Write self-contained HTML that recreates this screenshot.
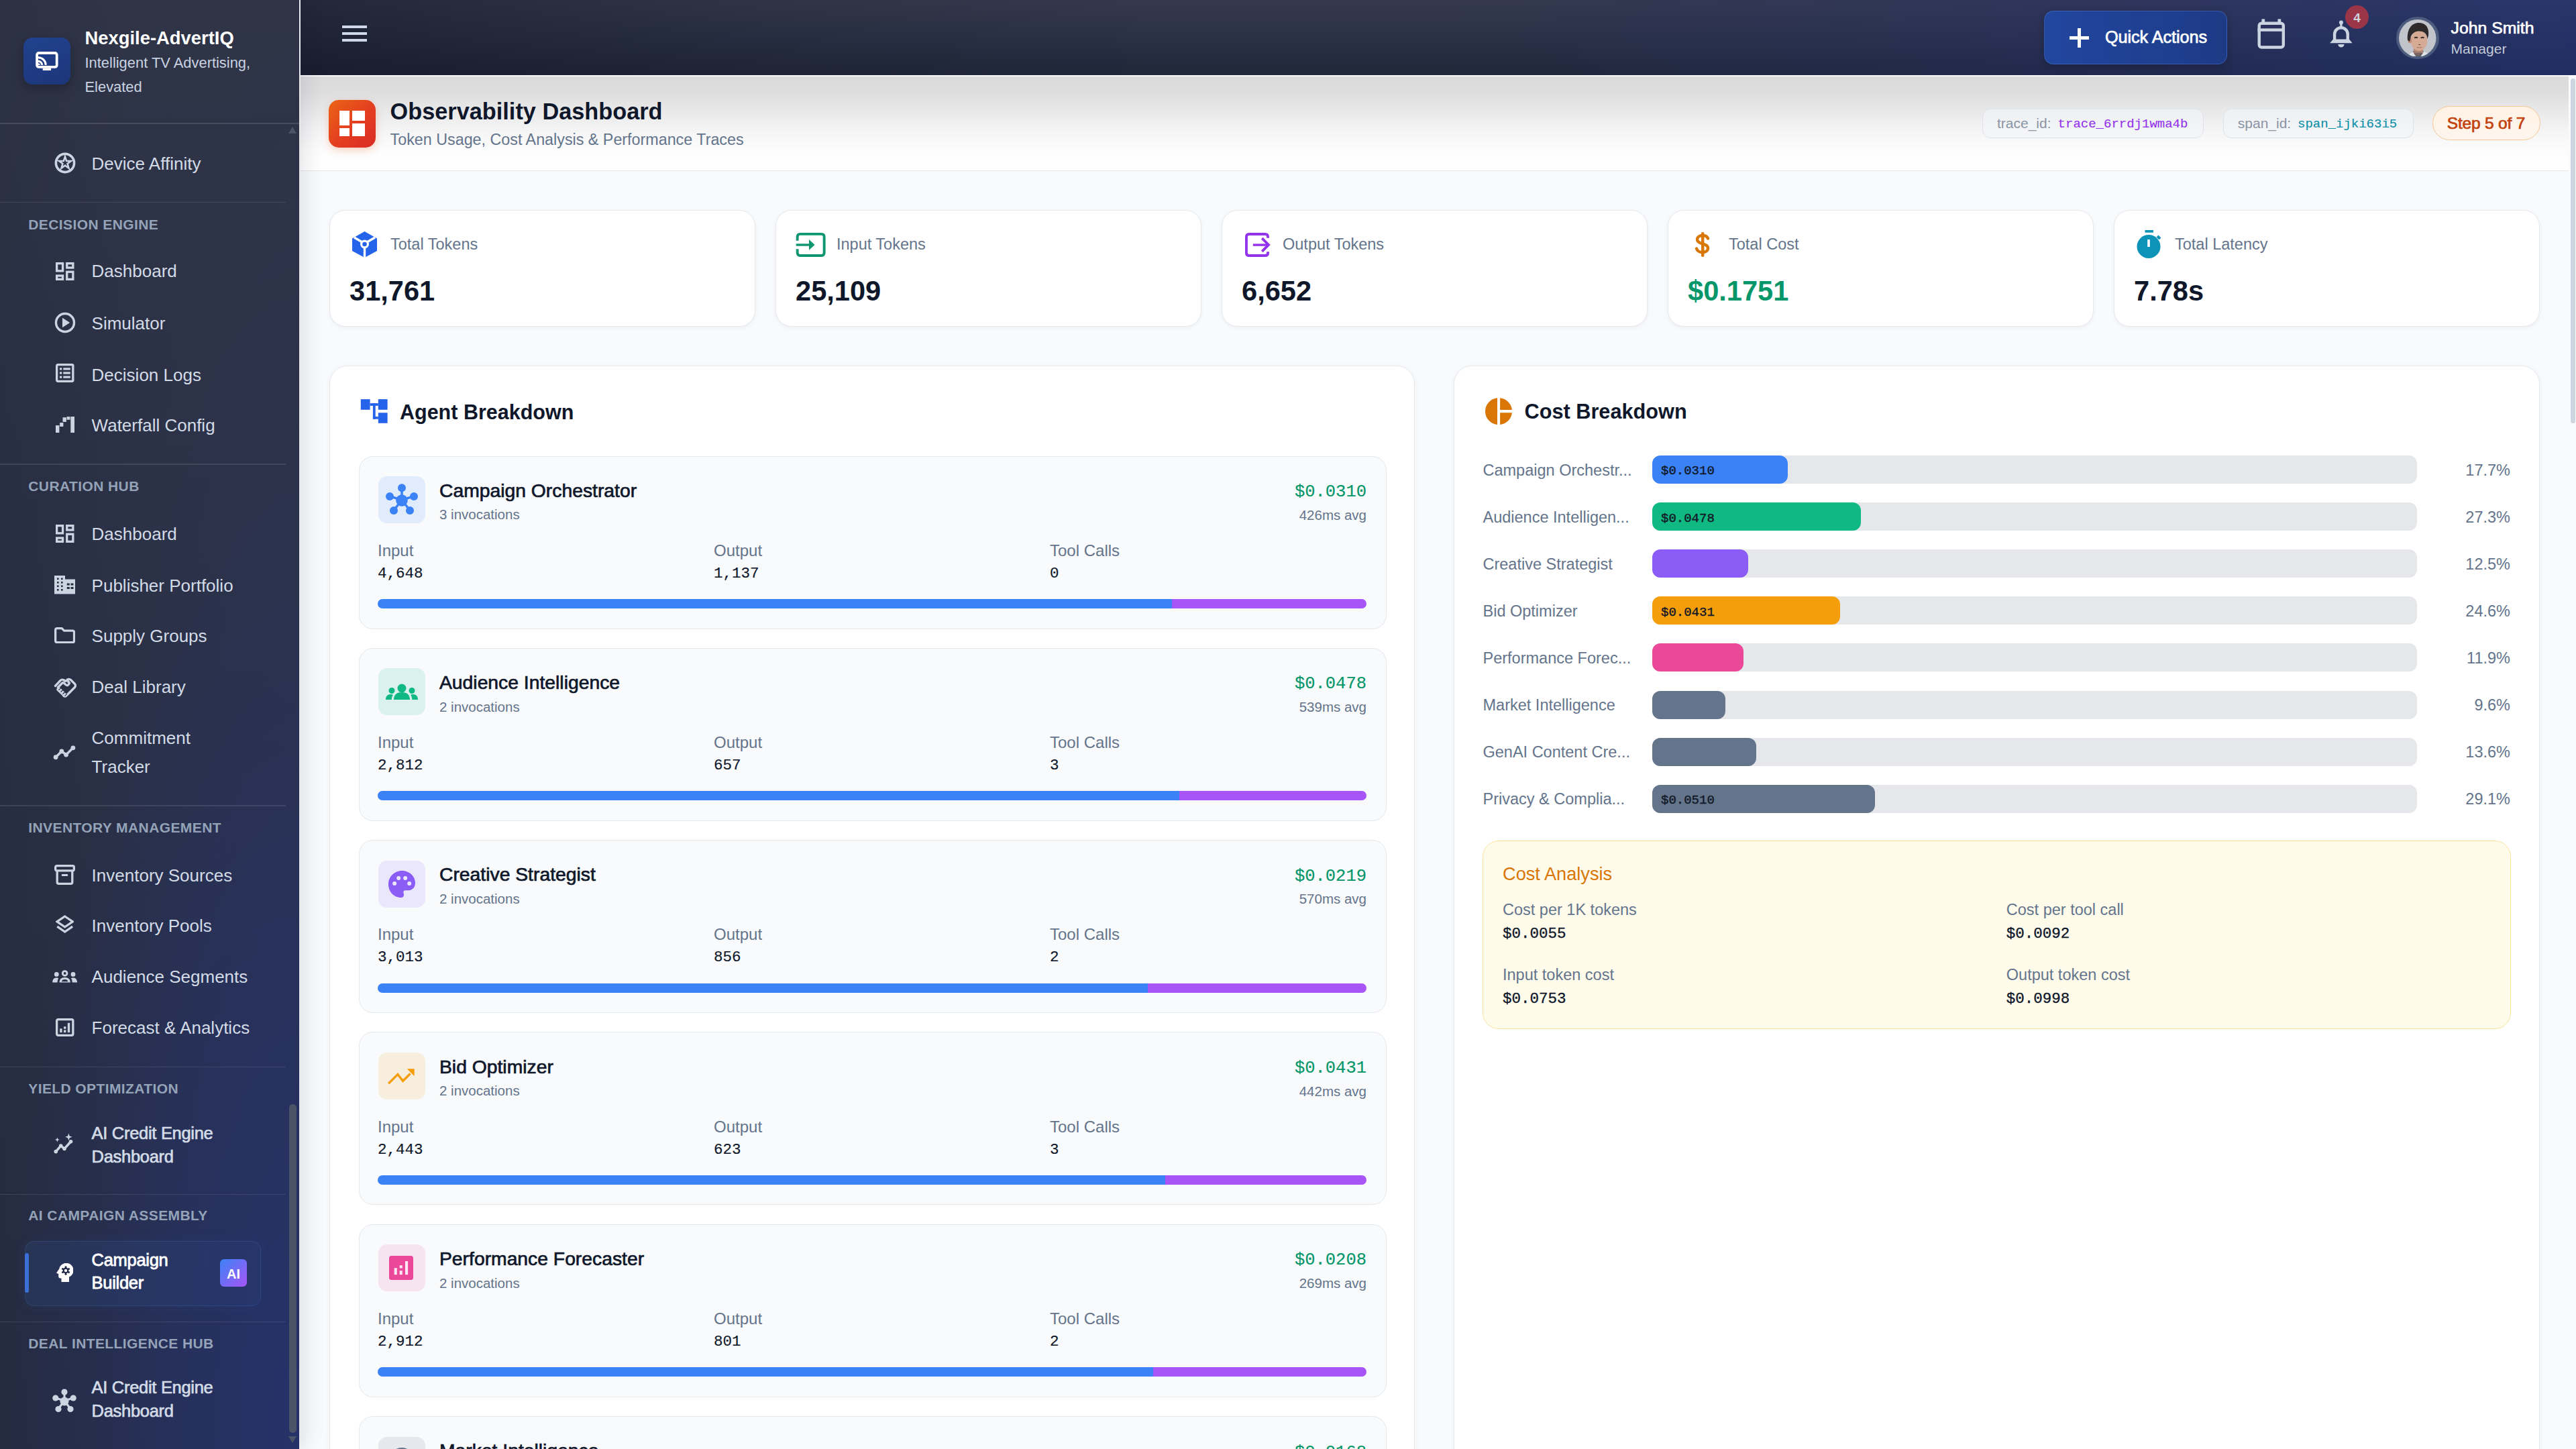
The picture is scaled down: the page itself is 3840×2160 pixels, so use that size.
<!DOCTYPE html>
<html><head><meta charset="utf-8"><title>Observability Dashboard</title>
<style>
*{box-sizing:border-box;margin:0;padding:0}
html,body{width:3840px;height:2160px;overflow:hidden;background:#f8fafc;font-family:"Liberation Sans",sans-serif}
.t{position:absolute;white-space:nowrap}
.r{position:absolute;display:block}
</style></head><body>
<div class="r" style="left:0.00px;top:0.00px;width:446.00px;height:2160.00px;background:radial-gradient(ellipse 110% 70% at 100% 100%,rgba(36,50,112,0.75) 0%,rgba(36,50,112,0.3) 55%,rgba(36,50,112,0) 90%),linear-gradient(90deg,rgba(18,22,36,0.10) 0%,rgba(0,0,0,0) 45%),radial-gradient(ellipse 80% 110% at 100% 95%,rgba(44,58,125,0.28) 0%,rgba(44,58,125,0) 85%),linear-gradient(180deg,#2f3447 0%,#2b3146 40%,#272d43 100%);box-shadow:6px 0 30px rgba(15,23,42,0.12);z-index:2"></div>
<div class="r" style="left:35.00px;top:56.00px;width:70.00px;height:70.00px;border-radius:14px;background:linear-gradient(160deg,#21428f 0%,#1c3679 100%);box-shadow:0 6px 16px rgba(0,0,0,0.25);z-index:3"></div>
<svg class="r" style="left:52.00px;top:76.00px;z-index:3" width="36.00" height="30.00" viewBox="0 0 36 30"><rect x="3.1" y="3" width="29.6" height="20.8" rx="2.6" fill="none" stroke="#fff" stroke-width="3.8"/><rect x="11.7" y="25.5" width="12.4" height="3.5" fill="#fff"/><path d="M5 9.8A11.3 11.3 0 0 1 16.3 21.1" fill="none" stroke="#fff" stroke-width="3"/><path d="M5 15.3A5.8 5.8 0 0 1 10.8 21.1" fill="none" stroke="#fff" stroke-width="3"/><path d="M5 18.3A2.8 2.8 0 0 1 7.8 21.1H5Z" fill="#fff"/></svg>
<div class="t" style="top:42.80px;font-size:27.4px;line-height:27.4px;font-weight:700;color:#ffffff;font-family:'Liberation Sans',sans-serif;left:126.50px;z-index:3">Nexgile-AdvertIQ</div>
<div class="t" style="top:82.96px;font-size:21.9px;line-height:21.9px;font-weight:400;color:#c9d2e0;font-family:'Liberation Sans',sans-serif;left:126.50px;z-index:3">Intelligent TV Advertising,</div>
<div class="t" style="top:119.36px;font-size:21.9px;line-height:21.9px;font-weight:400;color:#c9d2e0;font-family:'Liberation Sans',sans-serif;left:126.50px;z-index:3">Elevated</div>
<div class="r" style="left:0.00px;top:183.00px;width:446.00px;height:1.50px;background:rgba(255,255,255,0.12);z-index:3"></div>
<div class="t" style="top:231.39px;font-size:26px;line-height:26px;font-weight:400;color:#d3dbe7;font-family:'Liberation Sans',sans-serif;left:136.60px;z-index:3">Device Affinity</div>
<svg class="r" style="left:80.60px;top:227.00px;z-index:3" width="32.00" height="32.00" viewBox="0 0 32 32"><circle cx="16" cy="16" r="13.6" fill="none" stroke="#cbd5e1" stroke-width="3.6"/><path d="M16 2.5L19.1 11.8 28.8 11.8 21 17.6 23.9 26.9 16 21.2 8.1 26.9 11 17.6 3.2 11.8 12.9 11.8Z" fill="#cbd5e1"/><path d="M16 10.6L17.3 14.3 21.2 14.3 18.1 16.6 19.2 20.4 16 18.1 12.8 20.4 13.9 16.6 10.8 14.3 14.7 14.3Z" fill="#2b3146"/></svg>
<div class="r" style="left:0.00px;top:300.50px;width:426.00px;height:1.50px;background:rgba(255,255,255,0.10);z-index:3"></div>
<div class="t" style="top:323.62px;font-size:21px;line-height:21px;font-weight:700;color:#94a3b8;font-family:'Liberation Sans',sans-serif;letter-spacing:0.4px;left:42.30px;z-index:3">DECISION ENGINE</div>
<div class="t" style="top:391.49px;font-size:26px;line-height:26px;font-weight:400;color:#d3dbe7;font-family:'Liberation Sans',sans-serif;left:136.60px;z-index:3">Dashboard</div>
<svg class="r" style="left:83.00px;top:390.60px;z-index:3" width="27.50" height="27.00" viewBox="0 0 27.5 27"><g fill="none" stroke="#cbd5e1" stroke-width="3.3"><rect x="1.65" y="1.65" width="8.9" height="11.2"/><rect x="16.75" y="1.65" width="9.1" height="6.4"/><rect x="1.65" y="20" width="8.9" height="5.35"/><rect x="16.75" y="14.25" width="9.1" height="11.1"/></g></svg>
<div class="t" style="top:468.99px;font-size:26px;line-height:26px;font-weight:400;color:#d3dbe7;font-family:'Liberation Sans',sans-serif;left:136.60px;z-index:3">Simulator</div>
<svg class="r" style="left:80.65px;top:464.85px;z-index:3" width="32.00" height="32.00" viewBox="0 0 32 32"><circle cx="16" cy="16" r="13.5" fill="none" stroke="#cbd5e1" stroke-width="3.4"/><path d="M12 8.8v14.4l11.2-7.2z" fill="#cbd5e1"/></svg>
<div class="t" style="top:545.99px;font-size:26px;line-height:26px;font-weight:400;color:#d3dbe7;font-family:'Liberation Sans',sans-serif;left:136.60px;z-index:3">Decision Logs</div>
<svg class="r" style="left:83.00px;top:542.00px;z-index:3" width="27.50" height="28.00" viewBox="0 0 27.5 28"><rect x="1.65" y="1.65" width="24.2" height="24.7" rx="1.5" fill="none" stroke="#cbd5e1" stroke-width="3.3"/><g fill="#cbd5e1"><rect x="6" y="6.3" width="3.3" height="3.2"/><rect x="11.3" y="6.3" width="10.5" height="3.2"/><rect x="6" y="12.4" width="3.3" height="3.2"/><rect x="11.3" y="12.4" width="10.5" height="3.2"/><rect x="6" y="18.5" width="3.3" height="3.2"/><rect x="11.3" y="18.5" width="10.5" height="3.2"/></g></svg>
<div class="t" style="top:620.69px;font-size:26px;line-height:26px;font-weight:400;color:#d3dbe7;font-family:'Liberation Sans',sans-serif;left:136.60px;z-index:3">Waterfall Config</div>
<svg class="r" style="left:82.60px;top:621.00px;z-index:3" width="28.20" height="24.00" viewBox="0 0 28.2 24"><g fill="#cbd5e1"><rect x="0" y="13.1" width="5.4" height="10.9"/><rect x="6.2" y="9.1" width="5.2" height="5.8"/><rect x="10.5" y="1.2" width="5.4" height="6.7"/><rect x="16.6" y="0.1" width="4.8" height="4.6"/><rect x="22.3" y="0" width="5.9" height="24"/></g></svg>
<div class="r" style="left:0.00px;top:691.20px;width:426.00px;height:1.50px;background:rgba(255,255,255,0.10);z-index:3"></div>
<div class="t" style="top:713.72px;font-size:21px;line-height:21px;font-weight:700;color:#94a3b8;font-family:'Liberation Sans',sans-serif;letter-spacing:0.4px;left:42.30px;z-index:3">CURATION HUB</div>
<div class="t" style="top:782.99px;font-size:26px;line-height:26px;font-weight:400;color:#d3dbe7;font-family:'Liberation Sans',sans-serif;left:136.60px;z-index:3">Dashboard</div>
<svg class="r" style="left:83.00px;top:782.10px;z-index:3" width="27.50" height="27.00" viewBox="0 0 27.5 27"><g fill="none" stroke="#cbd5e1" stroke-width="3.3"><rect x="1.65" y="1.65" width="8.9" height="11.2"/><rect x="16.75" y="1.65" width="9.1" height="6.4"/><rect x="1.65" y="20" width="8.9" height="5.35"/><rect x="16.75" y="14.25" width="9.1" height="11.1"/></g></svg>
<div class="t" style="top:859.79px;font-size:26px;line-height:26px;font-weight:400;color:#d3dbe7;font-family:'Liberation Sans',sans-serif;left:136.60px;z-index:3">Publisher Portfolio</div>
<svg class="r" style="left:81.00px;top:858.20px;z-index:3" width="31.20" height="27.40" viewBox="0 0 31.2 27.4"><path d="M0 0H16V5.4H31.2V27.4H0Z" fill="#cbd5e1"/><g fill="#262c42"><rect x="4" y="3.5" width="2.6" height="2.6"/><rect x="10" y="3.5" width="2.6" height="2.6"/><rect x="4" y="9" width="2.6" height="2.6"/><rect x="10" y="9" width="2.6" height="2.6"/><rect x="4" y="14.5" width="2.6" height="2.6"/><rect x="10" y="14.5" width="2.6" height="2.6"/><rect x="4" y="20" width="2.6" height="2.6"/><rect x="10" y="20" width="2.6" height="2.6"/><rect x="18.8" y="11.5" width="4" height="3"/><rect x="24.5" y="11.5" width="4" height="3"/><rect x="18.8" y="17" width="4" height="3"/><rect x="24.5" y="17" width="4" height="3"/></g></svg>
<div class="t" style="top:935.39px;font-size:26px;line-height:26px;font-weight:400;color:#d3dbe7;font-family:'Liberation Sans',sans-serif;left:136.60px;z-index:3">Supply Groups</div>
<svg class="r" style="left:81.00px;top:935.00px;z-index:3" width="31.20" height="24.30" viewBox="0 0 31.2 24.3"><path d="M1.65 4.2Q1.65 1.65 4.2 1.65H11.2L14.6 5.2H27Q29.55 5.2 29.55 7.75V20.1Q29.55 22.65 27 22.65H4.2Q1.65 22.65 1.65 20.1Z" fill="none" stroke="#cbd5e1" stroke-width="3.3" stroke-linejoin="round"/></svg>
<div class="t" style="top:1010.99px;font-size:26px;line-height:26px;font-weight:400;color:#d3dbe7;font-family:'Liberation Sans',sans-serif;left:136.60px;z-index:3">Deal Library</div>
<svg class="r" style="left:80.00px;top:1008.50px;z-index:3" width="34.00" height="31.00" viewBox="0 0 34 31"><path d="M2.5 13.5L10 5.5Q12 3.5 14.5 4.5L17 6M20.5 4Q23 2.5 25.5 4.5L31.5 10.5Q33.5 13 31.5 15.5L19 28Q17 30 15 28.5" fill="none" stroke="#cbd5e1" stroke-width="3.3" stroke-linecap="round" stroke-linejoin="round"/><path d="M5.5 16.5L12.5 9.5Q14 8 15.5 9.5L18.5 12Q20.5 13.5 22 11.5L23.5 9.5Q22 6 19 5.5L16 7" fill="none" stroke="#cbd5e1" stroke-width="3.3" stroke-linejoin="round"/><path d="M4.5 17.5Q3.5 19.5 5.5 21L14 29Q16 30.5 18 28.5L20 26.5 10 16.5 7 14.5Z" fill="#cbd5e1"/><g stroke="#232a40" stroke-width="1.1"><path d="M7.5 19.5L11.5 16.2M10.5 22.5L14.2 19.2M13.5 25.5L17 22.5M16.5 28.3L19.6 25.6"/></g></svg>
<div class="t" style="top:1087.39px;font-size:26px;line-height:26px;font-weight:400;color:#d3dbe7;font-family:'Liberation Sans',sans-serif;left:136.60px;z-index:3">Commitment</div>
<div class="t" style="top:1129.59px;font-size:26px;line-height:26px;font-weight:400;color:#d3dbe7;font-family:'Liberation Sans',sans-serif;left:136.60px;z-index:3">Tracker</div>
<svg class="r" style="left:79.30px;top:1104.00px;z-index:3" width="34.00" height="34.00" viewBox="0 0 33 33"><path d="M4 24l8.5-8.5 6.5 5 10-10" fill="none" stroke="#cbd5e1" stroke-width="3.4" stroke-linejoin="round"/><circle cx="4" cy="24" r="3.3" fill="#cbd5e1"/><circle cx="12.5" cy="15.5" r="3.3" fill="#cbd5e1"/><circle cx="19" cy="20.5" r="3.3" fill="#cbd5e1"/><circle cx="29" cy="10.5" r="3.3" fill="#cbd5e1"/></svg>
<div class="r" style="left:0.00px;top:1200.00px;width:426.00px;height:1.50px;background:rgba(255,255,255,0.10);z-index:3"></div>
<div class="t" style="top:1222.52px;font-size:21px;line-height:21px;font-weight:700;color:#94a3b8;font-family:'Liberation Sans',sans-serif;letter-spacing:0.4px;left:42.30px;z-index:3">INVENTORY MANAGEMENT</div>
<div class="t" style="top:1291.89px;font-size:26px;line-height:26px;font-weight:400;color:#d3dbe7;font-family:'Liberation Sans',sans-serif;left:136.60px;z-index:3">Inventory Sources</div>
<svg class="r" style="left:81.20px;top:1288.70px;z-index:3" width="31.00" height="30.00" viewBox="0 0 31 30"><rect x="1.65" y="1.65" width="27.7" height="7.2" rx="2" fill="none" stroke="#cbd5e1" stroke-width="3.3"/><path d="M4.2 8.8V26Q4.2 28.35 6.5 28.35H24.5Q26.8 28.35 26.8 26V8.8" fill="none" stroke="#cbd5e1" stroke-width="3.3"/><rect x="10.8" y="14" width="9.4" height="3.1" rx="1" fill="#cbd5e1"/></svg>
<div class="t" style="top:1366.79px;font-size:26px;line-height:26px;font-weight:400;color:#d3dbe7;font-family:'Liberation Sans',sans-serif;left:136.60px;z-index:3">Inventory Pools</div>
<svg class="r" style="left:83.10px;top:1364.00px;z-index:3" width="27.40" height="29.00" viewBox="0 0 27.4 29"><path d="M13.7 2L25.4 9.9 13.7 17.8 2 9.9Z" fill="none" stroke="#cbd5e1" stroke-width="3.2" stroke-linejoin="miter"/><path d="M2.3 17.2L13.7 25 25.1 17.2" fill="none" stroke="#cbd5e1" stroke-width="3.3"/></svg>
<div class="t" style="top:1442.99px;font-size:26px;line-height:26px;font-weight:400;color:#d3dbe7;font-family:'Liberation Sans',sans-serif;left:136.60px;z-index:3">Audience Segments</div>
<svg class="r" style="left:78.10px;top:1446.40px;z-index:3" width="37.30" height="18.60" viewBox="0 0 37.3 18.6"><g fill="#cbd5e1"><circle cx="6.3" cy="6.4" r="3.4"/><path d="M0.2 18.6C0.2 14 2.5 11.5 6.3 11.5 7.6 11.5 8.6 11.8 9.4 12.3 8.2 14 7.6 16 7.6 18.6Z"/><circle cx="31" cy="6.4" r="3.4"/><path d="M37.1 18.6C37.1 14 34.8 11.5 31 11.5 29.7 11.5 28.7 11.8 27.9 12.3 29.1 14 29.7 16 29.7 18.6Z"/></g><circle cx="18.65" cy="4.9" r="3.3" fill="none" stroke="#cbd5e1" stroke-width="2.9"/><path d="M10.5 18.6C10.5 13.8 13.5 11 18.65 11S26.8 13.8 26.8 18.6Z" fill="#cbd5e1"/><path d="M14 17.2C14.4 15.2 16 14.1 18.65 14.1S22.9 15.2 23.3 17.2Z" fill="#262d46"/></svg>
<div class="t" style="top:1518.99px;font-size:26px;line-height:26px;font-weight:400;color:#d3dbe7;font-family:'Liberation Sans',sans-serif;left:136.60px;z-index:3">Forecast & Analytics</div>
<svg class="r" style="left:83.00px;top:1518.40px;z-index:3" width="27.50" height="27.00" viewBox="0 0 27.5 27"><rect x="1.65" y="1.65" width="24.2" height="23.7" rx="2" fill="none" stroke="#cbd5e1" stroke-width="3.3"/><g fill="#cbd5e1"><rect x="6.2" y="15.3" width="3.4" height="5.8"/><rect x="12" y="17.5" width="3.4" height="3.6"/><rect x="12" y="12.3" width="3.4" height="3.4"/><rect x="17.8" y="6.8" width="3.4" height="14.3"/></g></svg>
<div class="r" style="left:0.00px;top:1589.90px;width:426.00px;height:1.50px;background:rgba(255,255,255,0.10);z-index:3"></div>
<div class="t" style="top:1612.02px;font-size:21px;line-height:21px;font-weight:700;color:#94a3b8;font-family:'Liberation Sans',sans-serif;letter-spacing:0.4px;left:42.30px;z-index:3">YIELD OPTIMIZATION</div>
<div class="t" style="top:1677.41px;font-size:25.5px;line-height:25.5px;font-weight:400;color:#d3dbe7;font-family:'Liberation Sans',sans-serif;-webkit-text-stroke:0.7px currentColor;left:136.60px;z-index:3;letter-spacing:-0.3px">AI Credit Engine</div>
<div class="t" style="top:1712.11px;font-size:25.5px;line-height:25.5px;font-weight:400;color:#d3dbe7;font-family:'Liberation Sans',sans-serif;-webkit-text-stroke:0.7px currentColor;left:136.60px;z-index:3;letter-spacing:-0.3px">Dashboard</div>
<svg class="r" style="left:79.30px;top:1689.00px;z-index:3" width="34.00" height="34.00" viewBox="0 0 32 32"><path d="M4 26l7-8 5 4 9-10" fill="none" stroke="#cbd5e1" stroke-width="3.4" stroke-linejoin="round"/><circle cx="4" cy="26" r="2.6" fill="#cbd5e1"/><circle cx="11" cy="18" r="2.6" fill="#cbd5e1"/><circle cx="16" cy="22" r="2.6" fill="#cbd5e1"/><circle cx="25" cy="12" r="2.6" fill="#cbd5e1"/><path d="M22 0.5l1.3 3.7 3.7 1.3-3.7 1.3-1.3 3.7-1.3-3.7-3.7-1.3 3.7-1.3zM6 6l.9 2.4 2.4.9-2.4.9L6 12.6l-.9-2.4-2.4-.9 2.4-.9z" fill="#cbd5e1"/></svg>
<div class="r" style="left:0.00px;top:1779.50px;width:426.00px;height:1.50px;background:rgba(255,255,255,0.10);z-index:3"></div>
<div class="t" style="top:1801.22px;font-size:21px;line-height:21px;font-weight:700;color:#94a3b8;font-family:'Liberation Sans',sans-serif;letter-spacing:0.4px;left:42.30px;z-index:3">AI CAMPAIGN ASSEMBLY</div>
<div class="r" style="left:37.00px;top:1850.00px;width:352.00px;height:97.00px;border-radius:14px;background:linear-gradient(90deg,rgba(59,130,246,0.10),rgba(59,130,246,0.06));border:1.5px solid rgba(96,165,250,0.14);box-shadow:0 0 18px rgba(59,130,246,0.08);z-index:3"></div>
<div class="r" style="left:37.00px;top:1868.00px;width:6.00px;height:59.00px;border-radius:3px;background:#3b6fd8;z-index:3"></div>
<div class="t" style="top:1865.91px;font-size:25.5px;line-height:25.5px;font-weight:400;color:#ffffff;font-family:'Liberation Sans',sans-serif;-webkit-text-stroke:0.8px currentColor;left:136.60px;z-index:3;letter-spacing:-0.3px">Campaign</div>
<div class="t" style="top:1900.41px;font-size:25.5px;line-height:25.5px;font-weight:400;color:#ffffff;font-family:'Liberation Sans',sans-serif;-webkit-text-stroke:0.8px currentColor;left:136.60px;z-index:3;letter-spacing:-0.3px">Builder</div>
<svg class="r" style="left:84.00px;top:1883.00px;z-index:3" width="25.00" height="28.00" viewBox="0 0 25 28"><path d="M4.2 8.5L0 14.7 3.2 16V20Q3.2 22.4 5.6 22.4H7.5V28H19V20.5A10.8 10.8 0 1 0 4.2 8.5Z" fill="#ffffff"/><g fill="#1b2440"><circle cx="14" cy="11" r="4.4"/><circle cx="14.00" cy="5.80" r="1.5"/><circle cx="18.50" cy="8.40" r="1.5"/><circle cx="18.50" cy="13.60" r="1.5"/><circle cx="14.00" cy="16.20" r="1.5"/><circle cx="9.50" cy="13.60" r="1.5"/><circle cx="9.50" cy="8.40" r="1.5"/></g><circle cx="14" cy="11" r="2.2" fill="#ffffff"/></svg>
<div class="r" style="left:328.00px;top:1877.00px;width:40.00px;height:41.00px;border-radius:6px;background:linear-gradient(135deg,#3b82f6,#a855f7);z-index:3"></div>
<div class="t" style="top:1889.07px;font-size:20px;line-height:20px;font-weight:700;color:#ffffff;font-family:'Liberation Sans',sans-serif;left:-152.00px;width:1000px;text-align:center;z-index:3">AI</div>
<div class="r" style="left:0.00px;top:1969.50px;width:426.00px;height:1.50px;background:rgba(255,255,255,0.10);z-index:3"></div>
<div class="t" style="top:1991.82px;font-size:21px;line-height:21px;font-weight:700;color:#94a3b8;font-family:'Liberation Sans',sans-serif;letter-spacing:0.4px;left:42.30px;z-index:3">DEAL INTELLIGENCE HUB</div>
<div class="t" style="top:2055.91px;font-size:25.5px;line-height:25.5px;font-weight:400;color:#d3dbe7;font-family:'Liberation Sans',sans-serif;-webkit-text-stroke:0.7px currentColor;left:136.60px;z-index:3;letter-spacing:-0.3px">AI Credit Engine</div>
<div class="t" style="top:2091.11px;font-size:25.5px;line-height:25.5px;font-weight:400;color:#d3dbe7;font-family:'Liberation Sans',sans-serif;-webkit-text-stroke:0.7px currentColor;left:136.60px;z-index:3;letter-spacing:-0.3px">Dashboard</div>
<svg class="r" style="left:78.30px;top:2070.00px;z-index:3" width="36.00" height="36.00" viewBox="0 0 36 36"><g stroke="#cbd5e1" stroke-width="3.2"><line x1="18" y1="18" x2="18" y2="5"/><line x1="18" y1="18" x2="5" y2="14"/><line x1="18" y1="18" x2="31" y2="14"/><line x1="18" y1="18" x2="9" y2="30"/><line x1="18" y1="18" x2="27" y2="30"/></g><g fill="#cbd5e1"><circle cx="18" cy="19" r="6.5"/><circle cx="18" cy="5" r="4.6"/><circle cx="4.8" cy="14" r="4.6"/><circle cx="31.2" cy="14" r="4.6"/><circle cx="9" cy="30.5" r="4.6"/><circle cx="27" cy="30.5" r="4.6"/></g></svg>
<svg class="r" style="left:430.00px;top:189.00px;z-index:3" width="12.00" height="10.00" viewBox="0 0 12 10"><path d="M6 0L12 10H0z" fill="#4b5568"/></svg>
<div class="r" style="left:431.00px;top:1646.00px;width:10.50px;height:490.00px;border-radius:5px;background:#4a5468;z-index:3"></div>
<svg class="r" style="left:430.00px;top:2141.00px;z-index:3" width="12.00" height="10.00" viewBox="0 0 12 10"><path d="M0 0H12L6 10z" fill="#4b5568"/></svg>
<div class="r" style="left:446.00px;top:0.00px;width:2.00px;height:112.00px;background:#e8ecf2;z-index:2"></div>
<div class="r" style="left:448.00px;top:0.00px;width:3392.00px;height:112.00px;background:linear-gradient(90deg,rgba(14,18,32,0.45) 0%,rgba(14,18,32,0.15) 20%,rgba(14,18,32,0) 38%,rgba(34,48,120,0) 50%,rgba(34,48,120,0.35) 80%,rgba(34,50,125,0.6) 100%),linear-gradient(180deg,#35394d 0%,#2b3145 50%,#202638 100%);z-index:1"></div>
<div class="r" style="left:509.60px;top:38.00px;width:37.00px;height:4.00px;background:#cfd8e6;z-index:2"></div>
<div class="r" style="left:509.60px;top:48.00px;width:37.00px;height:4.00px;background:#cfd8e6;z-index:2"></div>
<div class="r" style="left:509.60px;top:58.00px;width:37.00px;height:4.00px;background:#cfd8e6;z-index:2"></div>
<div class="r" style="left:3047.00px;top:16.00px;width:272.50px;height:80.00px;border-radius:14px;background:linear-gradient(90deg,#22479f 0%,#1d3a86 100%);border:1.5px solid rgba(96,140,230,0.35);box-shadow:0 4px 14px rgba(0,0,0,0.2);z-index:2"></div>
<svg class="r" style="left:3085.00px;top:42.00px;z-index:2" width="29.00" height="29.00" viewBox="0 0 29 29"><rect x="12" y="0" width="5" height="29" fill="#fff"/><rect x="0" y="12" width="29" height="5" fill="#fff"/></svg>
<div class="t" style="top:42.58px;font-size:25.3px;line-height:25.3px;font-weight:400;color:#ffffff;font-family:'Liberation Sans',sans-serif;-webkit-text-stroke:0.7px currentColor;letter-spacing:-0.1px;left:3138.00px;z-index:2">Quick Actions</div>
<svg class="r" style="left:3365.00px;top:27.50px;z-index:2" width="42.00" height="45.00" viewBox="0 0 42 45"><rect x="2.7" y="6.7" width="36.1" height="35.8" rx="3.5" fill="none" stroke="#cbd5e1" stroke-width="4.4"/><rect x="0.5" y="14.4" width="40.5" height="4.4" fill="#cbd5e1"/><rect x="6.4" y="0.4" width="4.8" height="6" fill="#cbd5e1"/><rect x="30.4" y="0.4" width="4.8" height="6" fill="#cbd5e1"/></svg>
<svg class="r" style="left:3473.00px;top:30.00px;z-index:2" width="34.00" height="41.00" viewBox="0 0 34 41"><circle cx="16.9" cy="3.6" r="3" fill="#cbd5e1"/><rect x="15.3" y="3.5" width="3.2" height="7" fill="#cbd5e1"/><path d="M7.1 30V21A9.8 9.8 0 0 1 26.7 21V30" fill="none" stroke="#cbd5e1" stroke-width="4.4"/><path d="M0.2 34.2L4.9 28.4H28.9L33.6 34.2Z" fill="#cbd5e1"/><path d="M12.3 35.9H21.5A4.6 4.6 0 0 1 12.3 35.9Z" fill="#cbd5e1"/></svg>
<div class="r" style="left:3496.00px;top:8.00px;width:35.00px;height:35.00px;border-radius:50%;background:#9b3548;z-index:2"></div>
<div class="t" style="top:16.91px;font-size:19px;line-height:19px;font-weight:700;color:#cfd3dc;font-family:'Liberation Sans',sans-serif;left:3013.50px;width:1000px;text-align:center;z-index:2">4</div>
<div class="r" style="left:3572.20px;top:24.90px;width:63.50px;height:63.50px;border-radius:50%;background:#4d5b7e;z-index:2"></div>
<svg class="r" style="left:3576.20px;top:28.90px;z-index:2" width="55.50" height="55.50" viewBox="0 0 55.5 55.5"><defs><clipPath id="av"><circle cx="27.75" cy="27.75" r="27.75"/></clipPath></defs><g clip-path="url(#av)"><rect width="56" height="56" fill="#c2c4cb"/><path d="M14 56c1-5 4-7 9-8l7 2 7-2c5 1 8 3 9 8z" fill="#dfe2e7"/><path d="M21 48l5-3h8l3 3-5 8h-6z" fill="#5f5a62"/><rect x="22" y="40" width="14" height="10" fill="#b48676"/><ellipse cx="30" cy="31.5" rx="12.3" ry="15.3" fill="#d6ab96"/><ellipse cx="16.3" cy="31" rx="3" ry="4.5" fill="#c08e7b"/><path d="M13 31C11.5 14 19.5 5 29.5 5 39.5 5 45.5 11.5 44 24L42.5 29C41.5 21 37.5 17.5 30.5 17.5 24 17.5 20.5 20 18 25L16 33Z" fill="#2e2a2b"/><path d="M23 27.5q3-1.5 5 0" stroke="#3a2a26" stroke-width="1.8" fill="none"/><path d="M32.5 27.5q3-1.5 5 0" stroke="#3a2a26" stroke-width="1.8" fill="none"/><path d="M28.5 37h4l-1.5 1.5z" fill="#5b3d34"/><path d="M26.5 41.5q4 1 8 0" stroke="#a8766a" stroke-width="1.1" fill="none"/><path d="M20 46q6 4 14 2l-3 6h-7z" fill="#8b6a66" opacity="0.5"/></g></svg>
<div class="t" style="top:29.60px;font-size:24.8px;line-height:24.8px;font-weight:400;color:#ffffff;font-family:'Liberation Sans',sans-serif;-webkit-text-stroke:0.7px currentColor;left:3653.50px;z-index:2">John Smith</div>
<div class="t" style="top:61.82px;font-size:21px;line-height:21px;font-weight:400;color:#c3cbd9;font-family:'Liberation Sans',sans-serif;left:3653.50px;z-index:2">Manager</div>
<div class="r" style="left:448.00px;top:112.00px;width:3381.00px;height:143.00px;background:linear-gradient(180deg,#dadadb 0%,#dededf 18%,#e9e9ea 38%,#f6f6f7 62%,#fdfdfd 82%,#ffffff 100%);border-bottom:1.5px solid #e3e6ea"></div>
<div class="r" style="left:448.00px;top:112.00px;width:3381.00px;height:2.00px;background:#f7f7f8"></div>
<div class="r" style="left:489.60px;top:149.00px;width:70.50px;height:70.50px;border-radius:15px;background:linear-gradient(135deg,#ea6414 0%,#e33a22 60%,#d92c26 100%);box-shadow:0 4px 12px rgba(234,88,12,0.25)"></div>
<svg class="r" style="left:506.00px;top:165.00px;" width="38.00" height="38.00" viewBox="0 0 38 38"><g fill="#fff"><rect x="0" y="0" width="15" height="22"/><rect x="19" y="0" width="19" height="15"/><rect x="0" y="26" width="15" height="12"/><rect x="19" y="19" width="19" height="19"/></g></svg>
<div class="t" style="top:148.96px;font-size:34.3px;line-height:34.3px;font-weight:700;color:#0f172a;font-family:'Liberation Sans',sans-serif;left:581.60px;">Observability Dashboard</div>
<div class="t" style="top:196.77px;font-size:23.3px;line-height:23.3px;font-weight:400;color:#64748b;font-family:'Liberation Sans',sans-serif;left:581.60px;">Token Usage, Cost Analysis &amp; Performance Traces</div>
<div class="r" style="left:2954.50px;top:162.00px;width:330.50px;height:44.00px;border-radius:12px;background:rgba(241,245,249,0.6);border:1.5px solid #dfe3e8"></div>
<div class="t" style="top:172.82px;font-size:21px;line-height:21px;font-weight:400;color:#8a94a3;font-family:'Liberation Sans',sans-serif;left:2977.00px;">trace_id:</div>
<div class="t" style="top:176.04px;font-size:19px;line-height:19px;font-weight:400;color:#9333ea;font-family:'Liberation Mono',monospace;-webkit-text-stroke:0.15px currentColor;left:3067.60px;">trace_6rrdj1wma4b</div>
<div class="r" style="left:3314.00px;top:162.00px;width:283.50px;height:44.00px;border-radius:12px;background:rgba(241,245,249,0.6);border:1.5px solid #dfe3e8"></div>
<div class="t" style="top:172.82px;font-size:21px;line-height:21px;font-weight:400;color:#8a94a3;font-family:'Liberation Sans',sans-serif;left:3335.80px;">span_id:</div>
<div class="t" style="top:176.04px;font-size:19px;line-height:19px;font-weight:400;color:#0e8fa8;font-family:'Liberation Mono',monospace;-webkit-text-stroke:0.15px currentColor;left:3425.00px;">span_ijki63i5</div>
<div class="r" style="left:3626.00px;top:158.00px;width:161.00px;height:51.00px;border-radius:26px;background:linear-gradient(180deg,#fef2e4,#fdf6ee);border:1.5px solid #f6c896"></div>
<div class="t" style="top:172.26px;font-size:24.5px;line-height:24.5px;font-weight:400;color:#c2410c;font-family:'Liberation Sans',sans-serif;-webkit-text-stroke:0.7px currentColor;letter-spacing:-0.2px;left:3206.00px;width:1000px;text-align:center;">Step 5 of 7</div>
<div class="r" style="left:491.00px;top:313.00px;width:635.00px;height:174.00px;border-radius:24px;background:#fff;border:1.5px solid #e6e9ee;box-shadow:0 2px 6px rgba(15,23,42,0.05)"></div>
<div class="t" style="top:352.80px;font-size:23.5px;line-height:23.5px;font-weight:400;color:#64748b;font-family:'Liberation Sans',sans-serif;left:582.00px;">Total Tokens</div>
<div class="t" style="top:412.78px;font-size:41.6px;line-height:41.6px;font-weight:700;color:#0f172a;font-family:'Liberation Sans',sans-serif;left:521.00px;">31,761</div>
<div class="r" style="left:1156.00px;top:313.00px;width:635.00px;height:174.00px;border-radius:24px;background:#fff;border:1.5px solid #e6e9ee;box-shadow:0 2px 6px rgba(15,23,42,0.05)"></div>
<div class="t" style="top:352.80px;font-size:23.5px;line-height:23.5px;font-weight:400;color:#64748b;font-family:'Liberation Sans',sans-serif;left:1247.00px;">Input Tokens</div>
<div class="t" style="top:412.78px;font-size:41.6px;line-height:41.6px;font-weight:700;color:#0f172a;font-family:'Liberation Sans',sans-serif;left:1186.00px;">25,109</div>
<div class="r" style="left:1821.00px;top:313.00px;width:635.00px;height:174.00px;border-radius:24px;background:#fff;border:1.5px solid #e6e9ee;box-shadow:0 2px 6px rgba(15,23,42,0.05)"></div>
<div class="t" style="top:352.80px;font-size:23.5px;line-height:23.5px;font-weight:400;color:#64748b;font-family:'Liberation Sans',sans-serif;left:1912.00px;">Output Tokens</div>
<div class="t" style="top:412.78px;font-size:41.6px;line-height:41.6px;font-weight:700;color:#0f172a;font-family:'Liberation Sans',sans-serif;left:1851.00px;">6,652</div>
<div class="r" style="left:2486.00px;top:313.00px;width:635.00px;height:174.00px;border-radius:24px;background:#fff;border:1.5px solid #e6e9ee;box-shadow:0 2px 6px rgba(15,23,42,0.05)"></div>
<div class="t" style="top:352.80px;font-size:23.5px;line-height:23.5px;font-weight:400;color:#64748b;font-family:'Liberation Sans',sans-serif;left:2577.00px;">Total Cost</div>
<div class="t" style="top:412.78px;font-size:41.6px;line-height:41.6px;font-weight:700;color:#059669;font-family:'Liberation Sans',sans-serif;left:2516.00px;">$0.1751</div>
<div class="r" style="left:3151.00px;top:313.00px;width:635.00px;height:174.00px;border-radius:24px;background:#fff;border:1.5px solid #e6e9ee;box-shadow:0 2px 6px rgba(15,23,42,0.05)"></div>
<div class="t" style="top:352.80px;font-size:23.5px;line-height:23.5px;font-weight:400;color:#64748b;font-family:'Liberation Sans',sans-serif;left:3242.00px;">Total Latency</div>
<div class="t" style="top:412.78px;font-size:41.6px;line-height:41.6px;font-weight:700;color:#0f172a;font-family:'Liberation Sans',sans-serif;left:3181.00px;">7.78s</div>
<svg class="r" style="left:525.20px;top:344.70px;" width="37.00" height="39.00" viewBox="0 0 37 39"><path d="M18.5 0L37 10.5v18.5L18.5 39 0 29V10.5z" fill="#2563eb"/><path d="M3 9l15.5 9M34 9L18.5 18M18.5 18v21" stroke="#fff" stroke-width="3.4"/><circle cx="18.5" cy="19" r="6.5" fill="#fff"/><circle cx="18.5" cy="19" r="3.3" fill="#2563eb"/></svg>
<svg class="r" style="left:1185.00px;top:346.00px;" width="47.00" height="38.00" viewBox="0 0 47 38"><path d="M3.65 12.7V7Q3.65 2.85 7.8 2.85H39.5Q43.65 2.85 43.65 7V30.8Q43.65 34.95 39.5 34.95H7.8Q3.65 34.95 3.65 30.8V25.3" fill="none" stroke="#0f9670" stroke-width="3.9"/><rect x="1.7" y="17.3" width="20" height="3.4" fill="#0f9670"/><path d="M21 11L29.5 19 21 26.8Z" fill="#0f9670"/></svg>
<svg class="r" style="left:1855.70px;top:346.90px;" width="38.00" height="37.00" viewBox="0 0 38 37"><path d="M34.05 7.7V6Q34.05 1.95 30 1.95H6Q1.95 1.95 1.95 6V30Q1.95 34.05 6 34.05H30Q34.05 34.05 34.05 30V28.3" fill="none" stroke="#9333ea" stroke-width="3.9"/><rect x="11.8" y="16.4" width="22" height="3.4" fill="#9333ea"/><path d="M25.3 8.2L35 17.9 25.3 27.8" fill="none" stroke="#9333ea" stroke-width="3.9"/></svg>
<svg class="r" style="left:2525.70px;top:346.00px;" width="23.00" height="37.00" viewBox="0 0 23 37"><path d="M20 9.5c-1-3-4-4.5-8-4.5-4.5 0-8 2.5-8 6s3 5 8 6.5 8 2.5 8 6.5-3.5 6-8 6-8-2-9-5.5" fill="none" stroke="#d97706" stroke-width="4.4" stroke-linecap="round"/><rect x="10" y="0" width="4.4" height="37" rx="2" fill="#d97706"/></svg>
<svg class="r" style="left:3185.00px;top:343.00px;" width="38.00" height="42.00" viewBox="0 0 38 42"><circle cx="18" cy="24.5" r="17.5" fill="#0e93b8"/><rect x="12.5" y="0" width="12.4" height="3.7" fill="#0e93b8"/><path d="M31 9l4 4" stroke="#0e93b8" stroke-width="4"/><rect x="16.2" y="14" width="3.6" height="11" fill="#fff"/></svg>
<div class="r" style="left:491.00px;top:545.00px;width:1618.00px;height:1700.00px;border-radius:27px;background:#fff;border:1.5px solid #e6e9ee;box-shadow:0 2px 8px rgba(15,23,42,0.05)"></div>
<svg class="r" style="left:537.00px;top:595.00px;" width="41.00" height="36.00" viewBox="0 0 41 36"><g fill="#2563eb"><rect x="0.8" y="0.1" width="13.8" height="15.7"/><rect x="26.8" y="0.1" width="13.8" height="15.7"/><rect x="26.8" y="20.3" width="13.8" height="15.5"/><rect x="14.6" y="6.1" width="12.2" height="3.8"/><rect x="18.9" y="6.1" width="3.8" height="23.6"/><rect x="18.9" y="26" width="7.9" height="3.7"/></g></svg>
<div class="t" style="top:598.78px;font-size:30.5px;line-height:30.5px;font-weight:700;color:#0f172a;font-family:'Liberation Sans',sans-serif;left:596.00px;">Agent Breakdown</div>
<div class="r" style="left:535.00px;top:679.50px;width:1532.00px;height:258.00px;border-radius:21px;background:#f8fafc;border:1.5px solid #e5e8ed"></div>
<div class="r" style="left:563.50px;top:710.00px;width:70.00px;height:70.00px;border-radius:13px;background:rgba(59,130,246,0.12)"></div>
<svg class="r" style="left:574.50px;top:721.00px;" width="48.00" height="47.00" viewBox="0 0 48 47"><g stroke="#3b82f6" stroke-width="3.6"><line x1="24" y1="24" x2="24" y2="6"/><line x1="24" y1="24" x2="6" y2="19"/><line x1="24" y1="24" x2="42" y2="19"/><line x1="24" y1="24" x2="12" y2="40"/><line x1="24" y1="24" x2="36" y2="40"/></g><g fill="#3b82f6"><circle cx="24" cy="25" r="8.8"/><circle cx="24" cy="6.2" r="6"/><circle cx="6" cy="19" r="6"/><circle cx="42" cy="19" r="6"/><circle cx="12" cy="40" r="6"/><circle cx="36" cy="40" r="6"/></g></svg>
<div class="t" style="top:716.64px;font-size:28.3px;line-height:28.3px;font-weight:400;color:#0f172a;font-family:'Liberation Sans',sans-serif;-webkit-text-stroke:0.7px currentColor;left:655.00px;">Campaign Orchestrator</div>
<div class="t" style="top:757.44px;font-size:20.5px;line-height:20.5px;font-weight:400;color:#64748b;font-family:'Liberation Sans',sans-serif;left:655.00px;">3 invocations</div>
<div class="t" style="top:721.06px;font-size:25.5px;line-height:25.5px;font-weight:400;color:#059669;font-family:'Liberation Mono',monospace;-webkit-text-stroke:0.15px currentColor;right:1803.00px;text-align:right;">$0.0310</div>
<div class="t" style="top:757.64px;font-size:20.5px;line-height:20.5px;font-weight:400;color:#64748b;font-family:'Liberation Sans',sans-serif;right:1803.00px;text-align:right;">426ms avg</div>
<div class="t" style="top:808.68px;font-size:24px;line-height:24px;font-weight:400;color:#64748b;font-family:'Liberation Sans',sans-serif;left:563.00px;">Input</div>
<div class="t" style="top:843.76px;font-size:22.5px;line-height:22.5px;font-weight:400;color:#0f172a;font-family:'Liberation Mono',monospace;-webkit-text-stroke:0.15px currentColor;left:563.00px;">4,648</div>
<div class="t" style="top:808.68px;font-size:24px;line-height:24px;font-weight:400;color:#64748b;font-family:'Liberation Sans',sans-serif;left:1064.00px;">Output</div>
<div class="t" style="top:843.76px;font-size:22.5px;line-height:22.5px;font-weight:400;color:#0f172a;font-family:'Liberation Mono',monospace;-webkit-text-stroke:0.15px currentColor;left:1064.00px;">1,137</div>
<div class="t" style="top:808.68px;font-size:24px;line-height:24px;font-weight:400;color:#64748b;font-family:'Liberation Sans',sans-serif;left:1565.00px;">Tool Calls</div>
<div class="t" style="top:843.76px;font-size:22.5px;line-height:22.5px;font-weight:400;color:#0f172a;font-family:'Liberation Mono',monospace;-webkit-text-stroke:0.15px currentColor;left:1565.00px;">0</div>
<div class="r" style="left:563.00px;top:893.00px;width:1474.00px;height:14.00px;border-radius:7px;background:linear-gradient(90deg,#3b82f6 0,#3b82f6 1184.3px,#a855f7 1184.3px,#a855f7 100%)"></div>
<div class="r" style="left:535.00px;top:965.80px;width:1532.00px;height:258.00px;border-radius:21px;background:#f8fafc;border:1.5px solid #e5e8ed"></div>
<div class="r" style="left:563.50px;top:996.30px;width:70.00px;height:70.00px;border-radius:13px;background:rgba(16,185,129,0.12)"></div>
<svg class="r" style="left:574.50px;top:1019.30px;" width="48.00" height="24.00" viewBox="0 0 48 24"><g fill="#10b981"><circle cx="24" cy="7" r="6.5"/><path d="M12 24c0-8 5-11 12-11s12 3 12 11z"/><circle cx="9" cy="10.5" r="4.5"/><path d="M0 24c0-5 2.5-8 7-8 2 0 3 .4 3.8 1-1.3 2-2 4.5-2 7z"/><circle cx="39" cy="10.5" r="4.5"/><path d="M48 24c0-5-2.5-8-7-8-2 0-3 .4-3.8 1 1.3 2 2 4.5 2 7z"/></g></svg>
<div class="t" style="top:1002.94px;font-size:28.3px;line-height:28.3px;font-weight:400;color:#0f172a;font-family:'Liberation Sans',sans-serif;-webkit-text-stroke:0.7px currentColor;left:655.00px;">Audience Intelligence</div>
<div class="t" style="top:1043.74px;font-size:20.5px;line-height:20.5px;font-weight:400;color:#64748b;font-family:'Liberation Sans',sans-serif;left:655.00px;">2 invocations</div>
<div class="t" style="top:1007.36px;font-size:25.5px;line-height:25.5px;font-weight:400;color:#059669;font-family:'Liberation Mono',monospace;-webkit-text-stroke:0.15px currentColor;right:1803.00px;text-align:right;">$0.0478</div>
<div class="t" style="top:1043.94px;font-size:20.5px;line-height:20.5px;font-weight:400;color:#64748b;font-family:'Liberation Sans',sans-serif;right:1803.00px;text-align:right;">539ms avg</div>
<div class="t" style="top:1094.98px;font-size:24px;line-height:24px;font-weight:400;color:#64748b;font-family:'Liberation Sans',sans-serif;left:563.00px;">Input</div>
<div class="t" style="top:1130.06px;font-size:22.5px;line-height:22.5px;font-weight:400;color:#0f172a;font-family:'Liberation Mono',monospace;-webkit-text-stroke:0.15px currentColor;left:563.00px;">2,812</div>
<div class="t" style="top:1094.98px;font-size:24px;line-height:24px;font-weight:400;color:#64748b;font-family:'Liberation Sans',sans-serif;left:1064.00px;">Output</div>
<div class="t" style="top:1130.06px;font-size:22.5px;line-height:22.5px;font-weight:400;color:#0f172a;font-family:'Liberation Mono',monospace;-webkit-text-stroke:0.15px currentColor;left:1064.00px;">657</div>
<div class="t" style="top:1094.98px;font-size:24px;line-height:24px;font-weight:400;color:#64748b;font-family:'Liberation Sans',sans-serif;left:1565.00px;">Tool Calls</div>
<div class="t" style="top:1130.06px;font-size:22.5px;line-height:22.5px;font-weight:400;color:#0f172a;font-family:'Liberation Mono',monospace;-webkit-text-stroke:0.15px currentColor;left:1565.00px;">3</div>
<div class="r" style="left:563.00px;top:1179.30px;width:1474.00px;height:14.00px;border-radius:7px;background:linear-gradient(90deg,#3b82f6 0,#3b82f6 1194.8px,#a855f7 1194.8px,#a855f7 100%)"></div>
<div class="r" style="left:535.00px;top:1252.10px;width:1532.00px;height:258.00px;border-radius:21px;background:#f8fafc;border:1.5px solid #e5e8ed"></div>
<div class="r" style="left:563.50px;top:1282.60px;width:70.00px;height:70.00px;border-radius:13px;background:rgba(139,92,246,0.12)"></div>
<svg class="r" style="left:578.70px;top:1297.60px;" width="40.00" height="40.00" viewBox="0 0 40 40"><path d="M20 0C31 0 40 8 40 18C40 24.5 36 29.2 30 29.2H25.2C22.8 29.2 21.8 31.2 22.6 33.2C23.8 36.5 22.5 40 18.8 40C8 40 0 31 0 20C0 9 9 0 20 0Z" fill="#8b5cf6"/><g fill="#ece8fc"><circle cx="15.2" cy="11.1" r="3"/><circle cx="25.1" cy="11.1" r="3"/><circle cx="9.1" cy="19.1" r="3"/><circle cx="31.2" cy="19.1" r="3"/></g></svg>
<div class="t" style="top:1289.24px;font-size:28.3px;line-height:28.3px;font-weight:400;color:#0f172a;font-family:'Liberation Sans',sans-serif;-webkit-text-stroke:0.7px currentColor;left:655.00px;">Creative Strategist</div>
<div class="t" style="top:1330.04px;font-size:20.5px;line-height:20.5px;font-weight:400;color:#64748b;font-family:'Liberation Sans',sans-serif;left:655.00px;">2 invocations</div>
<div class="t" style="top:1293.66px;font-size:25.5px;line-height:25.5px;font-weight:400;color:#059669;font-family:'Liberation Mono',monospace;-webkit-text-stroke:0.15px currentColor;right:1803.00px;text-align:right;">$0.0219</div>
<div class="t" style="top:1330.24px;font-size:20.5px;line-height:20.5px;font-weight:400;color:#64748b;font-family:'Liberation Sans',sans-serif;right:1803.00px;text-align:right;">570ms avg</div>
<div class="t" style="top:1381.28px;font-size:24px;line-height:24px;font-weight:400;color:#64748b;font-family:'Liberation Sans',sans-serif;left:563.00px;">Input</div>
<div class="t" style="top:1416.36px;font-size:22.5px;line-height:22.5px;font-weight:400;color:#0f172a;font-family:'Liberation Mono',monospace;-webkit-text-stroke:0.15px currentColor;left:563.00px;">3,013</div>
<div class="t" style="top:1381.28px;font-size:24px;line-height:24px;font-weight:400;color:#64748b;font-family:'Liberation Sans',sans-serif;left:1064.00px;">Output</div>
<div class="t" style="top:1416.36px;font-size:22.5px;line-height:22.5px;font-weight:400;color:#0f172a;font-family:'Liberation Mono',monospace;-webkit-text-stroke:0.15px currentColor;left:1064.00px;">856</div>
<div class="t" style="top:1381.28px;font-size:24px;line-height:24px;font-weight:400;color:#64748b;font-family:'Liberation Sans',sans-serif;left:1565.00px;">Tool Calls</div>
<div class="t" style="top:1416.36px;font-size:22.5px;line-height:22.5px;font-weight:400;color:#0f172a;font-family:'Liberation Mono',monospace;-webkit-text-stroke:0.15px currentColor;left:1565.00px;">2</div>
<div class="r" style="left:563.00px;top:1465.60px;width:1474.00px;height:14.00px;border-radius:7px;background:linear-gradient(90deg,#3b82f6 0,#3b82f6 1147.9px,#a855f7 1147.9px,#a855f7 100%)"></div>
<div class="r" style="left:535.00px;top:1538.40px;width:1532.00px;height:258.00px;border-radius:21px;background:#f8fafc;border:1.5px solid #e5e8ed"></div>
<div class="r" style="left:563.50px;top:1568.90px;width:70.00px;height:70.00px;border-radius:13px;background:rgba(245,158,11,0.12)"></div>
<svg class="r" style="left:577.80px;top:1592.70px;" width="40.00" height="24.00" viewBox="0 0 40 24"><path d="M1.1 22.3L14.9 8.5 22.6 18.4 33.5 7.5" fill="none" stroke="#f59e0b" stroke-width="3.4" stroke-linejoin="miter"/><path d="M28.7 0.2H39.7V11.2Z" fill="#f59e0b"/></svg>
<div class="t" style="top:1575.54px;font-size:28.3px;line-height:28.3px;font-weight:400;color:#0f172a;font-family:'Liberation Sans',sans-serif;-webkit-text-stroke:0.7px currentColor;left:655.00px;">Bid Optimizer</div>
<div class="t" style="top:1616.34px;font-size:20.5px;line-height:20.5px;font-weight:400;color:#64748b;font-family:'Liberation Sans',sans-serif;left:655.00px;">2 invocations</div>
<div class="t" style="top:1579.96px;font-size:25.5px;line-height:25.5px;font-weight:400;color:#059669;font-family:'Liberation Mono',monospace;-webkit-text-stroke:0.15px currentColor;right:1803.00px;text-align:right;">$0.0431</div>
<div class="t" style="top:1616.54px;font-size:20.5px;line-height:20.5px;font-weight:400;color:#64748b;font-family:'Liberation Sans',sans-serif;right:1803.00px;text-align:right;">442ms avg</div>
<div class="t" style="top:1667.58px;font-size:24px;line-height:24px;font-weight:400;color:#64748b;font-family:'Liberation Sans',sans-serif;left:563.00px;">Input</div>
<div class="t" style="top:1702.66px;font-size:22.5px;line-height:22.5px;font-weight:400;color:#0f172a;font-family:'Liberation Mono',monospace;-webkit-text-stroke:0.15px currentColor;left:563.00px;">2,443</div>
<div class="t" style="top:1667.58px;font-size:24px;line-height:24px;font-weight:400;color:#64748b;font-family:'Liberation Sans',sans-serif;left:1064.00px;">Output</div>
<div class="t" style="top:1702.66px;font-size:22.5px;line-height:22.5px;font-weight:400;color:#0f172a;font-family:'Liberation Mono',monospace;-webkit-text-stroke:0.15px currentColor;left:1064.00px;">623</div>
<div class="t" style="top:1667.58px;font-size:24px;line-height:24px;font-weight:400;color:#64748b;font-family:'Liberation Sans',sans-serif;left:1565.00px;">Tool Calls</div>
<div class="t" style="top:1702.66px;font-size:22.5px;line-height:22.5px;font-weight:400;color:#0f172a;font-family:'Liberation Mono',monospace;-webkit-text-stroke:0.15px currentColor;left:1565.00px;">3</div>
<div class="r" style="left:563.00px;top:1751.90px;width:1474.00px;height:14.00px;border-radius:7px;background:linear-gradient(90deg,#3b82f6 0,#3b82f6 1174.5px,#a855f7 1174.5px,#a855f7 100%)"></div>
<div class="r" style="left:535.00px;top:1824.70px;width:1532.00px;height:258.00px;border-radius:21px;background:#f8fafc;border:1.5px solid #e5e8ed"></div>
<div class="r" style="left:563.50px;top:1855.20px;width:70.00px;height:70.00px;border-radius:13px;background:rgba(236,72,153,0.12)"></div>
<svg class="r" style="left:580.10px;top:1872.20px;" width="36.00" height="36.00" viewBox="0 0 36 36"><rect x="0" y="0" width="36" height="36" rx="3.5" fill="#ec4899"/><g fill="#fde7f4"><rect x="7.7" y="18.2" width="4.1" height="10"/><rect x="15.7" y="22.1" width="4.1" height="6.1"/><rect x="15.7" y="14.2" width="4.1" height="4.3"/><rect x="24" y="8" width="4.1" height="20.2"/></g></svg>
<div class="t" style="top:1861.84px;font-size:28.3px;line-height:28.3px;font-weight:400;color:#0f172a;font-family:'Liberation Sans',sans-serif;-webkit-text-stroke:0.7px currentColor;left:655.00px;">Performance Forecaster</div>
<div class="t" style="top:1902.64px;font-size:20.5px;line-height:20.5px;font-weight:400;color:#64748b;font-family:'Liberation Sans',sans-serif;left:655.00px;">2 invocations</div>
<div class="t" style="top:1866.26px;font-size:25.5px;line-height:25.5px;font-weight:400;color:#059669;font-family:'Liberation Mono',monospace;-webkit-text-stroke:0.15px currentColor;right:1803.00px;text-align:right;">$0.0208</div>
<div class="t" style="top:1902.84px;font-size:20.5px;line-height:20.5px;font-weight:400;color:#64748b;font-family:'Liberation Sans',sans-serif;right:1803.00px;text-align:right;">269ms avg</div>
<div class="t" style="top:1953.88px;font-size:24px;line-height:24px;font-weight:400;color:#64748b;font-family:'Liberation Sans',sans-serif;left:563.00px;">Input</div>
<div class="t" style="top:1988.96px;font-size:22.5px;line-height:22.5px;font-weight:400;color:#0f172a;font-family:'Liberation Mono',monospace;-webkit-text-stroke:0.15px currentColor;left:563.00px;">2,912</div>
<div class="t" style="top:1953.88px;font-size:24px;line-height:24px;font-weight:400;color:#64748b;font-family:'Liberation Sans',sans-serif;left:1064.00px;">Output</div>
<div class="t" style="top:1988.96px;font-size:22.5px;line-height:22.5px;font-weight:400;color:#0f172a;font-family:'Liberation Mono',monospace;-webkit-text-stroke:0.15px currentColor;left:1064.00px;">801</div>
<div class="t" style="top:1953.88px;font-size:24px;line-height:24px;font-weight:400;color:#64748b;font-family:'Liberation Sans',sans-serif;left:1565.00px;">Tool Calls</div>
<div class="t" style="top:1988.96px;font-size:22.5px;line-height:22.5px;font-weight:400;color:#0f172a;font-family:'Liberation Mono',monospace;-webkit-text-stroke:0.15px currentColor;left:1565.00px;">2</div>
<div class="r" style="left:563.00px;top:2038.20px;width:1474.00px;height:14.00px;border-radius:7px;background:linear-gradient(90deg,#3b82f6 0,#3b82f6 1156.0px,#a855f7 1156.0px,#a855f7 100%)"></div>
<div class="r" style="left:535.00px;top:2111.00px;width:1532.00px;height:258.00px;border-radius:21px;background:#f8fafc;border:1.5px solid #e5e8ed"></div>
<div class="r" style="left:563.50px;top:2141.50px;width:70.00px;height:70.00px;border-radius:13px;background:rgba(100,116,139,0.12)"></div>
<svg class="r" style="left:578.50px;top:2156.50px;" width="40.00" height="40.00" viewBox="0 0 40 40"><circle cx="20" cy="20" r="19" fill="#64748b"/></svg>
<div class="t" style="top:2148.14px;font-size:28.3px;line-height:28.3px;font-weight:400;color:#0f172a;font-family:'Liberation Sans',sans-serif;-webkit-text-stroke:0.7px currentColor;left:655.00px;">Market Intelligence</div>
<div class="t" style="top:2188.94px;font-size:20.5px;line-height:20.5px;font-weight:400;color:#64748b;font-family:'Liberation Sans',sans-serif;left:655.00px;">2 invocations</div>
<div class="t" style="top:2152.56px;font-size:25.5px;line-height:25.5px;font-weight:400;color:#059669;font-family:'Liberation Mono',monospace;-webkit-text-stroke:0.15px currentColor;right:1803.00px;text-align:right;">$0.0168</div>
<div class="t" style="top:2189.14px;font-size:20.5px;line-height:20.5px;font-weight:400;color:#64748b;font-family:'Liberation Sans',sans-serif;right:1803.00px;text-align:right;">300ms avg</div>
<div class="t" style="top:2240.18px;font-size:24px;line-height:24px;font-weight:400;color:#64748b;font-family:'Liberation Sans',sans-serif;left:563.00px;">Input</div>
<div class="t" style="top:2275.26px;font-size:22.5px;line-height:22.5px;font-weight:400;color:#0f172a;font-family:'Liberation Mono',monospace;-webkit-text-stroke:0.15px currentColor;left:563.00px;">2,100</div>
<div class="t" style="top:2240.18px;font-size:24px;line-height:24px;font-weight:400;color:#64748b;font-family:'Liberation Sans',sans-serif;left:1064.00px;">Output</div>
<div class="t" style="top:2275.26px;font-size:22.5px;line-height:22.5px;font-weight:400;color:#0f172a;font-family:'Liberation Mono',monospace;-webkit-text-stroke:0.15px currentColor;left:1064.00px;">500</div>
<div class="t" style="top:2240.18px;font-size:24px;line-height:24px;font-weight:400;color:#64748b;font-family:'Liberation Sans',sans-serif;left:1565.00px;">Tool Calls</div>
<div class="t" style="top:2275.26px;font-size:22.5px;line-height:22.5px;font-weight:400;color:#0f172a;font-family:'Liberation Mono',monospace;-webkit-text-stroke:0.15px currentColor;left:1565.00px;">1</div>
<div class="r" style="left:563.00px;top:2324.50px;width:1474.00px;height:14.00px;border-radius:7px;background:linear-gradient(90deg,#3b82f6 0,#3b82f6 1179.2px,#a855f7 1179.2px,#a855f7 100%)"></div>
<div class="r" style="left:2167.00px;top:545.00px;width:1619.00px;height:1700.00px;border-radius:27px;background:#fff;border:1.5px solid #e6e9ee;box-shadow:0 2px 8px rgba(15,23,42,0.05)"></div>
<svg class="r" style="left:2214.00px;top:592.80px;" width="41.00" height="41.00" viewBox="0 0 41 41"><g fill="#d97706"><path d="M18 0.2A20 20 0 0 0 18 40Z"/><path d="M22.1 0.21A20 20 0 0 1 39.89 18H22.1Z"/><path d="M22.1 22.2H39.89A20 20 0 0 1 22.1 39.99Z"/></g></svg>
<div class="t" style="top:598.61px;font-size:30.7px;line-height:30.7px;font-weight:700;color:#0f172a;font-family:'Liberation Sans',sans-serif;left:2272.50px;">Cost Breakdown</div>
<div class="t" style="top:689.60px;font-size:23.5px;line-height:23.5px;font-weight:400;color:#64748b;font-family:'Liberation Sans',sans-serif;left:2210.50px;">Campaign Orchestr...</div>
<div class="r" style="left:2463.00px;top:679.00px;width:1140.00px;height:42.00px;border-radius:12px;background:#e5e7eb"></div>
<div class="r" style="left:2463.00px;top:679.00px;width:201.78px;height:42.00px;border-radius:12px;background:#3b82f6"></div>
<div class="t" style="top:693.44px;font-size:19px;line-height:19px;font-weight:400;color:#111827;font-family:'Liberation Mono',monospace;-webkit-text-stroke:0.4px currentColor;left:2476.00px;">$0.0310</div>
<div class="t" style="top:689.60px;font-size:23.5px;line-height:23.5px;font-weight:400;color:#64748b;font-family:'Liberation Sans',sans-serif;right:98.00px;text-align:right;">17.7%</div>
<div class="t" style="top:759.70px;font-size:23.5px;line-height:23.5px;font-weight:400;color:#64748b;font-family:'Liberation Sans',sans-serif;left:2210.50px;">Audience Intelligen...</div>
<div class="r" style="left:2463.00px;top:749.10px;width:1140.00px;height:42.00px;border-radius:12px;background:#e5e7eb"></div>
<div class="r" style="left:2463.00px;top:749.10px;width:311.22px;height:42.00px;border-radius:12px;background:#10b981"></div>
<div class="t" style="top:763.54px;font-size:19px;line-height:19px;font-weight:400;color:#111827;font-family:'Liberation Mono',monospace;-webkit-text-stroke:0.4px currentColor;left:2476.00px;">$0.0478</div>
<div class="t" style="top:759.70px;font-size:23.5px;line-height:23.5px;font-weight:400;color:#64748b;font-family:'Liberation Sans',sans-serif;right:98.00px;text-align:right;">27.3%</div>
<div class="t" style="top:829.80px;font-size:23.5px;line-height:23.5px;font-weight:400;color:#64748b;font-family:'Liberation Sans',sans-serif;left:2210.50px;">Creative Strategist</div>
<div class="r" style="left:2463.00px;top:819.20px;width:1140.00px;height:42.00px;border-radius:12px;background:#e5e7eb"></div>
<div class="r" style="left:2463.00px;top:819.20px;width:142.50px;height:42.00px;border-radius:12px;background:#8b5cf6"></div>
<div class="t" style="top:829.80px;font-size:23.5px;line-height:23.5px;font-weight:400;color:#64748b;font-family:'Liberation Sans',sans-serif;right:98.00px;text-align:right;">12.5%</div>
<div class="t" style="top:899.90px;font-size:23.5px;line-height:23.5px;font-weight:400;color:#64748b;font-family:'Liberation Sans',sans-serif;left:2210.50px;">Bid Optimizer</div>
<div class="r" style="left:2463.00px;top:889.30px;width:1140.00px;height:42.00px;border-radius:12px;background:#e5e7eb"></div>
<div class="r" style="left:2463.00px;top:889.30px;width:280.44px;height:42.00px;border-radius:12px;background:#f59e0b"></div>
<div class="t" style="top:903.74px;font-size:19px;line-height:19px;font-weight:400;color:#111827;font-family:'Liberation Mono',monospace;-webkit-text-stroke:0.4px currentColor;left:2476.00px;">$0.0431</div>
<div class="t" style="top:899.90px;font-size:23.5px;line-height:23.5px;font-weight:400;color:#64748b;font-family:'Liberation Sans',sans-serif;right:98.00px;text-align:right;">24.6%</div>
<div class="t" style="top:970.00px;font-size:23.5px;line-height:23.5px;font-weight:400;color:#64748b;font-family:'Liberation Sans',sans-serif;left:2210.50px;">Performance Forec...</div>
<div class="r" style="left:2463.00px;top:959.40px;width:1140.00px;height:42.00px;border-radius:12px;background:#e5e7eb"></div>
<div class="r" style="left:2463.00px;top:959.40px;width:135.66px;height:42.00px;border-radius:12px;background:#ec4899"></div>
<div class="t" style="top:970.00px;font-size:23.5px;line-height:23.5px;font-weight:400;color:#64748b;font-family:'Liberation Sans',sans-serif;right:98.00px;text-align:right;">11.9%</div>
<div class="t" style="top:1040.10px;font-size:23.5px;line-height:23.5px;font-weight:400;color:#64748b;font-family:'Liberation Sans',sans-serif;left:2210.50px;">Market Intelligence</div>
<div class="r" style="left:2463.00px;top:1029.50px;width:1140.00px;height:42.00px;border-radius:12px;background:#e5e7eb"></div>
<div class="r" style="left:2463.00px;top:1029.50px;width:109.44px;height:42.00px;border-radius:12px;background:#64748b"></div>
<div class="t" style="top:1040.10px;font-size:23.5px;line-height:23.5px;font-weight:400;color:#64748b;font-family:'Liberation Sans',sans-serif;right:98.00px;text-align:right;">9.6%</div>
<div class="t" style="top:1110.20px;font-size:23.5px;line-height:23.5px;font-weight:400;color:#64748b;font-family:'Liberation Sans',sans-serif;left:2210.50px;">GenAI Content Cre...</div>
<div class="r" style="left:2463.00px;top:1099.60px;width:1140.00px;height:42.00px;border-radius:12px;background:#e5e7eb"></div>
<div class="r" style="left:2463.00px;top:1099.60px;width:155.04px;height:42.00px;border-radius:12px;background:#64748b"></div>
<div class="t" style="top:1110.20px;font-size:23.5px;line-height:23.5px;font-weight:400;color:#64748b;font-family:'Liberation Sans',sans-serif;right:98.00px;text-align:right;">13.6%</div>
<div class="t" style="top:1180.30px;font-size:23.5px;line-height:23.5px;font-weight:400;color:#64748b;font-family:'Liberation Sans',sans-serif;left:2210.50px;">Privacy &amp; Complia...</div>
<div class="r" style="left:2463.00px;top:1169.70px;width:1140.00px;height:42.00px;border-radius:12px;background:#e5e7eb"></div>
<div class="r" style="left:2463.00px;top:1169.70px;width:331.74px;height:42.00px;border-radius:12px;background:#64748b"></div>
<div class="t" style="top:1184.14px;font-size:19px;line-height:19px;font-weight:400;color:#111827;font-family:'Liberation Mono',monospace;-webkit-text-stroke:0.4px currentColor;left:2476.00px;">$0.0510</div>
<div class="t" style="top:1180.30px;font-size:23.5px;line-height:23.5px;font-weight:400;color:#64748b;font-family:'Liberation Sans',sans-serif;right:98.00px;text-align:right;">29.1%</div>
<div class="r" style="left:2210.00px;top:1253.00px;width:1533.00px;height:281.00px;border-radius:24px;background:#fffbeb;border:1.5px solid #fbe3a0"></div>
<div class="t" style="top:1289.27px;font-size:27.2px;line-height:27.2px;font-weight:400;color:#d97706;font-family:'Liberation Sans',sans-serif;left:2240.00px;">Cost Analysis</div>
<div class="t" style="top:1345.10px;font-size:23.5px;line-height:23.5px;font-weight:400;color:#64748b;font-family:'Liberation Sans',sans-serif;left:2240.00px;">Cost per 1K tokens</div>
<div class="t" style="top:1380.76px;font-size:22.5px;line-height:22.5px;font-weight:400;color:#0f172a;font-family:'Liberation Mono',monospace;-webkit-text-stroke:0.35px currentColor;left:2240.00px;">$0.0055</div>
<div class="t" style="top:1345.10px;font-size:23.5px;line-height:23.5px;font-weight:400;color:#64748b;font-family:'Liberation Sans',sans-serif;left:2990.80px;">Cost per tool call</div>
<div class="t" style="top:1380.76px;font-size:22.5px;line-height:22.5px;font-weight:400;color:#0f172a;font-family:'Liberation Mono',monospace;-webkit-text-stroke:0.35px currentColor;left:2990.80px;">$0.0092</div>
<div class="t" style="top:1442.10px;font-size:23.5px;line-height:23.5px;font-weight:400;color:#64748b;font-family:'Liberation Sans',sans-serif;left:2240.00px;">Input token cost</div>
<div class="t" style="top:1477.76px;font-size:22.5px;line-height:22.5px;font-weight:400;color:#0f172a;font-family:'Liberation Mono',monospace;-webkit-text-stroke:0.35px currentColor;left:2240.00px;">$0.0753</div>
<div class="t" style="top:1442.10px;font-size:23.5px;line-height:23.5px;font-weight:400;color:#64748b;font-family:'Liberation Sans',sans-serif;left:2990.80px;">Output token cost</div>
<div class="t" style="top:1477.76px;font-size:22.5px;line-height:22.5px;font-weight:400;color:#0f172a;font-family:'Liberation Mono',monospace;-webkit-text-stroke:0.35px currentColor;left:2990.80px;">$0.0998</div>
<div class="r" style="left:3829.00px;top:112.00px;width:11.00px;height:2048.00px;background:#f8fafc"></div>
<div class="r" style="left:3832.00px;top:116.50px;width:7.00px;height:514.00px;border-radius:4px;background:#cdd5e0"></div>
<script>(function(){var w=window.innerWidth;if(w&&Math.abs(w-3840)>2){document.documentElement.style.zoom=(w/3840);}})();</script>
</body></html>
